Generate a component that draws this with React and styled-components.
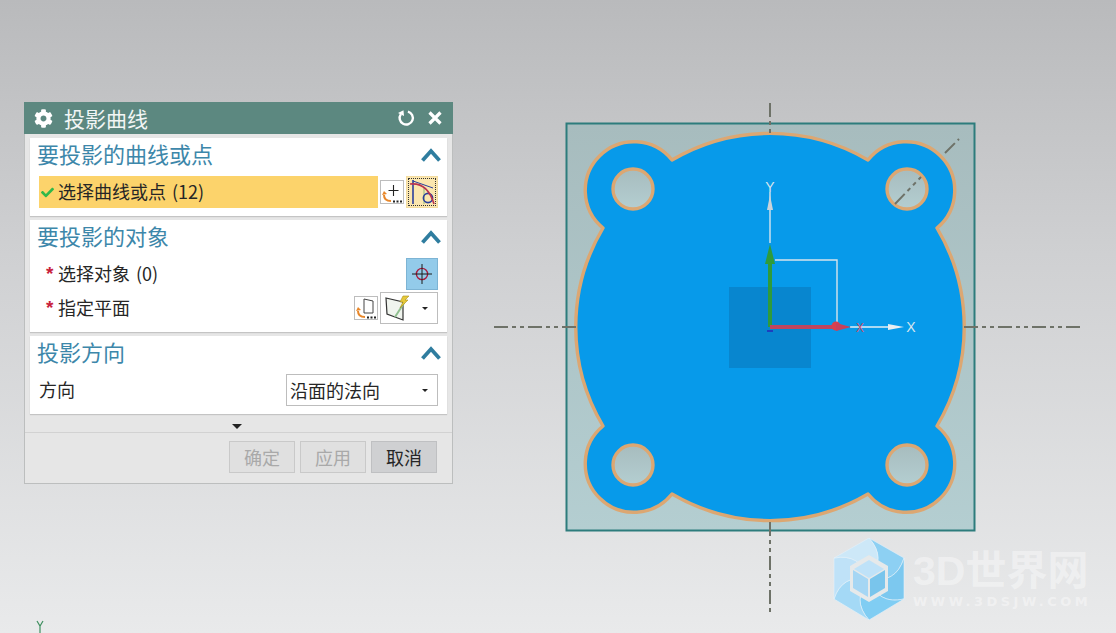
import React from "react";
import styled, { createGlobalStyle } from "styled-components";
import { FaCog, FaCheck } from "react-icons/fa";

const GlobalStyle = createGlobalStyle`
  html, body {
    margin: 0;
    padding: 0;
    overflow: hidden;
  }
  body {
    font-family: "Noto Sans CJK SC", "Liberation Sans", sans-serif;
  }
`;

const ChevronSvg = styled.svg`
  margin-top: 4px;
`;

function Chevron() {
  return (
    <ChevronSvg width="20" height="14" viewBox="0 0 20 14">
      <polyline points="1.5,12.5 10,3 18.5,12.5" fill="none" stroke="#2f7d9f" strokeWidth="3.8" />
    </ChevronSvg>
  );
}

function RedoIcon() {
  return (
    <svg width="20" height="20" viewBox="0 0 20 20">
      <path d="M6.5 4.6 A6.6 6.6 0 1 0 14 4.6" fill="none" stroke="#fff" strokeWidth="2.4" transform="rotate(-20 10 10)" />
      <polygon points="2,5 7.5,2.2 8,8" fill="#fff" />
    </svg>
  );
}

function CloseIcon() {
  return (
    <svg width="16" height="16" viewBox="0 0 16 16">
      <path d="M2.5 2.5 L13.5 13.5 M13.5 2.5 L2.5 13.5" stroke="#fff" strokeWidth="3.2" />
    </svg>
  );
}

function OrangeReturn() {
  return (
    <g>
      <path d="M3 14 Q3 20 10 20" fill="none" stroke="#e8872a" strokeWidth="2" />
      <polygon points="1,14 6,13 3,10" fill="#e8872a" />
    </g>
  );
}

function Dots() {
  return <path d="M12 20.5h2M15.5 20.5h2M19 20.5h2" stroke="#222" strokeWidth="2" />;
}

function AddIcon() {
  return (
    <svg width="22" height="22" viewBox="0 0 22 22">
      <path d="M12.5 4 V15 M7.5 9.5 H17.5" stroke="#222" strokeWidth="1.1" />
      <OrangeReturn />
      <Dots />
    </svg>
  );
}

function CurveIcon() {
  return (
    <svg width="26" height="28" viewBox="0 0 26 28">
      <path d="M4 2 V26" stroke="#2b3f9c" strokeWidth="1.6" />
      <path d="M4 3 L24 10" stroke="#2b3f9c" strokeWidth="1" />
      <path d="M15 10 V26" stroke="#8fb87a" strokeWidth="1" />
      <circle cx="19" cy="20" r="4.6" fill="none" stroke="#2b3f9c" strokeWidth="1.6" />
      <path d="M1 6 C10 5 20 9 25 26" fill="none" stroke="#b8324f" strokeWidth="1.6" />
    </svg>
  );
}

function CrosshairIcon() {
  return (
    <svg width="24" height="24" viewBox="0 0 24 24">
      <circle cx="12" cy="12" r="5.6" fill="none" stroke="#a81c3e" strokeWidth="1.4" />
      <path d="M12 2 V22 M2 12 H22" stroke="#1a1a1a" strokeWidth="1" />
    </svg>
  );
}

function PlaneReturnIcon() {
  return (
    <svg width="22" height="22" viewBox="0 0 22 22">
      <polygon points="9,2 18,4 18,16 9,16" fill="#fff" stroke="#444" strokeWidth="1" />
      <OrangeReturn />
      <Dots />
    </svg>
  );
}

function PlaneIcon() {
  return (
    <svg width="26" height="26" viewBox="0 0 26 26">
      <polygon points="2,3 19,7 19,25 3,19" fill="#f0f4ee" stroke="#333" strokeWidth="1.2" />
      <path d="M11 22 L20 8" stroke="#8fbf8f" strokeWidth="2" />
      <polygon points="19,1 25,1 21,5 24,5 16,13 19,7 16,7" fill="#e6c93a" stroke="#a98f1c" strokeWidth="0.6" />
    </svg>
  );
}

const Page = styled.div`
  position: relative;
  width: 1116px;
  height: 633px;
  overflow: hidden;
  background: linear-gradient(180deg, #b9babc 0%, #cfd0d2 40%, #e9eaeb 100%);
`;

const Drawing = styled.svg`
  position: absolute;
  left: 0;
  top: 0;
`;

const DialogWindow = styled.div`
  position: absolute;
  left: 24px;
  top: 102px;
  width: 429px;
  height: 382px;
  box-sizing: border-box;
  border: 1px solid #bcbebe;
  border-top: none;
  background: #e6e6e6;
  display: flex;
  flex-direction: column;
`;

const TitleBar = styled.div`
  height: 32px;
  margin: 0 -1px;
  background: #5c8880;
  color: #fff;
  display: flex;
  align-items: center;
  padding: 0 10px;
  flex: none;
`;

const TitleText = styled.span`
  font-size: 21px;
  line-height: 32px;
  margin-left: 11px;
  flex: 1;
  color: #f2f6f5;
`;

const TitleActions = styled.div`
  display: flex;
  align-items: center;
  gap: 11px;
`;

const Sections = styled.div`
  display: flex;
  flex-direction: column;
  gap: 4px;
  padding: 4px 5px 0;
`;

const Section = styled.section`
  background: #fff;
  padding: 0 9px 8px;
  box-shadow: 0 1px 1px #c4c4c4;
`;

const SectionHeader = styled.div`
  height: 38px;
  margin: 0 -3px 0 -2px;
  display: flex;
  align-items: center;
  justify-content: space-between;
  padding-bottom: 8px;
  box-sizing: border-box;
`;

const SectionTitle = styled.span`
  font-size: 22px;
  color: #3d87aa;
  line-height: 30px;
`;

const Rows = styled.div`
  display: flex;
  flex-direction: column;
  gap: 2px;
`;

const Row = styled.div`
  height: 32px;
  display: flex;
  align-items: center;
  gap: 2px;
`;

const Highlight = styled.div`
  flex: 1;
  height: 32px;
  background: #fcd36b;
  display: flex;
  align-items: center;
  padding-left: 2px;
`;

const CheckMark = styled(FaCheck)`
  width: 13px;
  height: 13px;
  color: #2fb84a;
  margin-right: 4px;
  flex: none;
`;

const Required = styled.span`
  width: 10px;
  margin-left: 7px;
  color: #c8213c;
  font-family: "Liberation Sans", sans-serif;
  font-size: 19px;
  font-weight: 700;
  line-height: 30px;
  flex: none;
`;

const Label = styled.span`
  flex: ${(props) => (props.$grow ? 1 : "none")};
  font-size: 18px;
  line-height: 31px;
  margin-bottom: 1px;
  word-spacing: 2px;
  color: #262626;
  white-space: nowrap;
`;

const IconButton = styled.div`
  width: 24px;
  height: 24px;
  box-sizing: border-box;
  border: 1px solid #bdbdbd;
  background: #fff;
  display: flex;
  align-items: center;
  justify-content: center;
  flex: none;
`;

const ActiveToolButton = styled.div`
  width: 32px;
  height: 32px;
  box-sizing: border-box;
  display: flex;
  align-items: center;
  justify-content: center;
  flex: none;
  background: ${(props) => (props.$blue ? "#93cbea" : "#fbe6ae")};
  border: ${(props) => (props.$blue ? "1px solid #7db4d4" : "1px solid #f3dca0")};
  outline: ${(props) => (props.$blue ? "none" : "1px dotted #333")};
  outline-offset: -3px;
`;

const DropButton = styled.div`
  width: ${(props) => props.$width}px;
  height: 32px;
  box-sizing: border-box;
  border: 1px solid #bdbdbd;
  background: #fff;
  display: flex;
  align-items: center;
  justify-content: space-between;
  padding: 0 9px 0 3px;
  font-size: 18px;
  color: #262626;
  flex: none;
`;

const Caret = styled.span`
  width: 0;
  height: 0;
  border-left: ${(props) => props.$size || 3}px solid transparent;
  border-right: ${(props) => props.$size || 3}px solid transparent;
  border-top: ${(props) => props.$size || 3}px solid #222;
`;

const Expander = styled.div`
  height: 18px;
  box-sizing: border-box;
  margin-top: 1px;
  padding: 6px 3px 0 0;
  border-bottom: 1px solid #d2d2d2;
  display: flex;
  align-items: center;
  justify-content: center;
`;

const Footer = styled.div`
  display: flex;
  justify-content: flex-end;
  gap: 5px;
  padding: 8px 15px 0 0;
`;

const FooterButton = styled.div`
  width: 66px;
  height: 32px;
  box-sizing: border-box;
  border: 1px solid ${(props) => (props.$disabled ? "#c9c9c9" : "#bfc0c2")};
  background: ${(props) => (props.$disabled ? "#e0e0e0" : "#cfd0d2")};
  color: ${(props) => (props.$disabled ? "#a9a9a9" : "#262626")};
  font-size: 18px;
  line-height: 30px;
  text-align: center;
`;

const Watermark = styled.div`
  position: absolute;
  left: 833px;
  top: 538px;
  display: flex;
  gap: 8px;
`;

const BrandText = styled.div`
  display: flex;
  flex-direction: column;
  margin-top: 10px;
  color: rgba(255, 255, 255, 0.4);
  font-weight: 700;
`;

const BrandName = styled.span`
  font-family: "Liberation Sans", "Noto Sans CJK SC", sans-serif;
  font-size: 41px;
  line-height: 46px;
  white-space: nowrap;
`;

const BrandUrl = styled.span`
  font-family: "DejaVu Sans", "Liberation Sans", sans-serif;
  font-size: 13px;
  line-height: 14px;
  letter-spacing: 3.5px;
  margin-top: 1px;
  white-space: nowrap;
`;

const OUTLINE =
  "M672 160 A193.5 193.5 0 0 1 868 160 A48.7 48.7 0 1 1 937 228 A193.5 193.5 0 0 1 937 426 A48.7 48.7 0 1 1 868 494 A193.5 193.5 0 0 1 672 494 A48.7 48.7 0 1 1 603 426 A193.5 193.5 0 0 1 603 228 A48.7 48.7 0 1 1 672 160 Z";

const HOLES = [
  [633, 189],
  [907, 189],
  [633, 465],
  [907, 465],
];

const CENTER_LINES = [
  "M770 103 V133",
  "M770 522 V612",
  "M494 327 H577",
  "M964 327 H1081",
  "M895 204 L921 177",
  "M945 153 L959 139",
];

// pinwheel blades of the logo, clockwise from the top corner
const BLADES = [
  ["M36 0 L71 20 Q63 46 36 41 Q54 20 36 0 Z", "#8dd0f3"],
  ["M71 20 L71 61 Q45 67 36 41 Q63 46 71 20 Z", "#7cc8ef"],
  ["M71 61 L36 82 Q18 62 36 41 Q45 67 71 61 Z", "#80cdf3"],
  ["M36 82 L1 61 Q9 36 36 41 Q18 62 36 82 Z", "#a4d9f6"],
  ["M1 61 L1 20 Q27 15 36 41 Q9 36 1 61 Z", "#bfe2f8"],
  ["M1 20 L36 0 Q54 20 36 41 Q27 15 1 20 Z", "#cde8f8"],
];

function CadView() {
  return (
    <Drawing width="1116" height="633" viewBox="0 0 1116 633">
      <defs>
        <linearGradient id="plate" x1="0" y1="0" x2="0" y2="1">
          <stop offset="0" stopColor="#a7bcbe" />
          <stop offset="1" stopColor="#b4ced1" />
        </linearGradient>
      </defs>
      <rect x="566.5" y="123.5" width="408" height="407" fill="url(#plate)" stroke="#2d7c7c" strokeWidth="2" />
      <path d={OUTLINE} fill="#079aea" stroke="#dca772" strokeWidth="3.4" strokeLinejoin="round" />
      {HOLES.map(([cx, cy]) => (
        <circle key={cx + "-" + cy} cx={cx} cy={cy} r="20" fill="url(#plate)" stroke="#dca772" strokeWidth="3.4" />
      ))}
      {CENTER_LINES.map((d) => (
        <path key={d} d={d} fill="none" stroke="#6e7268" strokeWidth="2" strokeDasharray="14 4 4 4 4 4" />
      ))}

      <rect x="729" y="287" width="82" height="81" fill="#0886cf" />
      <path d="M770 243 V192" stroke="#d9e6ee" strokeWidth="1.4" />
      <polygon points="770,195 773,210 767,210" fill="#c9d3da" />
      <text x="770" y="192" fontSize="14" fontFamily="Liberation Sans" fill="#d9e6ee" textAnchor="middle">Y</text>
      <path d="M775 260 H837 V322" fill="none" stroke="#d7e4ec" strokeWidth="1.4" />
      <path d="M850 327 H890" stroke="#e5eef4" strokeWidth="1.4" />
      <polygon points="888,324 904,327 888,330" fill="#e8eef2" />
      <text x="911" y="332" fontSize="14" fontFamily="Liberation Sans" fill="#d9e6ee" textAnchor="middle">X</text>
      <text x="860" y="332" fontSize="12" fontFamily="Liberation Sans" fill="#d0506a" textAnchor="middle">X</text>
      <path d="M770 327 V258" stroke="#2f9b3c" strokeWidth="4" />
      <polygon points="770,244 775,264 765,264" fill="#2f9b3c" />
      <path d="M770 327 H836" stroke="#bf4560" strokeWidth="4" />
      <circle cx="836" cy="326" r="4.5" fill="#d8404e" />
      <polygon points="851,327 836,323 836,331" fill="#c9405a" />
      <path d="M767 331 H773" stroke="#1d3fbf" strokeWidth="2" />

      <path d="M37 621 L40 626 L43 621 M40 626 V633" fill="none" stroke="#3f8f5f" strokeWidth="1.2" />
    </Drawing>
  );
}

function Logo() {
  return (
    <svg width="72" height="82" viewBox="0 0 72 82">
      {BLADES.map(([d, fill]) => (
        <path key={d} d={d} fill={fill} stroke="#e4f2fa" strokeWidth="0.6" />
      ))}
      <polygon points="36,17 55,28 55,53 36,64 17,53 17,28" fill="#e6e9ea" />
      <polygon points="36,22 51,31 36,40 21,31" fill="#bfe2f8" />
      <polygon points="20,32 35,41 35,59 20,50" fill="#a5d6f4" />
      <polygon points="37,41 52,32 52,50 37,59" fill="#79c5ec" />
    </svg>
  );
}

export default function App() {
  return (
    <Page>
      <GlobalStyle />
      <CadView />
      <DialogWindow>
        <TitleBar>
          <FaCog size={19} color="#fff" />
          <TitleText>投影曲线</TitleText>
          <TitleActions>
            <RedoIcon />
            <CloseIcon />
          </TitleActions>
        </TitleBar>
        <Sections>
          <Section>
            <SectionHeader>
              <SectionTitle>要投影的曲线或点</SectionTitle>
              <Chevron />
            </SectionHeader>
            <Row>
              <Highlight>
                <CheckMark />
                <Label>选择曲线或点 (12)</Label>
              </Highlight>
              <IconButton>
                <AddIcon />
              </IconButton>
              <ActiveToolButton>
                <CurveIcon />
              </ActiveToolButton>
            </Row>
          </Section>
          <Section>
            <SectionHeader>
              <SectionTitle>要投影的对象</SectionTitle>
              <Chevron />
            </SectionHeader>
            <Rows>
              <Row>
                <Required>*</Required>
                <Label $grow>选择对象 (0)</Label>
                <ActiveToolButton $blue>
                  <CrosshairIcon />
                </ActiveToolButton>
              </Row>
              <Row>
                <Required>*</Required>
                <Label $grow>指定平面</Label>
                <IconButton>
                  <PlaneReturnIcon />
                </IconButton>
                <DropButton $width={58}>
                  <PlaneIcon />
                  <Caret />
                </DropButton>
              </Row>
            </Rows>
          </Section>
          <Section>
            <SectionHeader>
              <SectionTitle>投影方向</SectionTitle>
              <Chevron />
            </SectionHeader>
            <Row>
              <Label $grow>方向</Label>
              <DropButton $width={152}>
                沿面的法向
                <Caret />
              </DropButton>
            </Row>
          </Section>
        </Sections>
        <Expander>
          <Caret $size={5} />
        </Expander>
        <Footer>
          <FooterButton $disabled>确定</FooterButton>
          <FooterButton $disabled>应用</FooterButton>
          <FooterButton>取消</FooterButton>
        </Footer>
      </DialogWindow>
      <Watermark>
        <Logo />
        <BrandText>
          <BrandName>3D世界网</BrandName>
          <BrandUrl>WWW.3DSJW.COM</BrandUrl>
        </BrandText>
      </Watermark>
    </Page>
  );
}
